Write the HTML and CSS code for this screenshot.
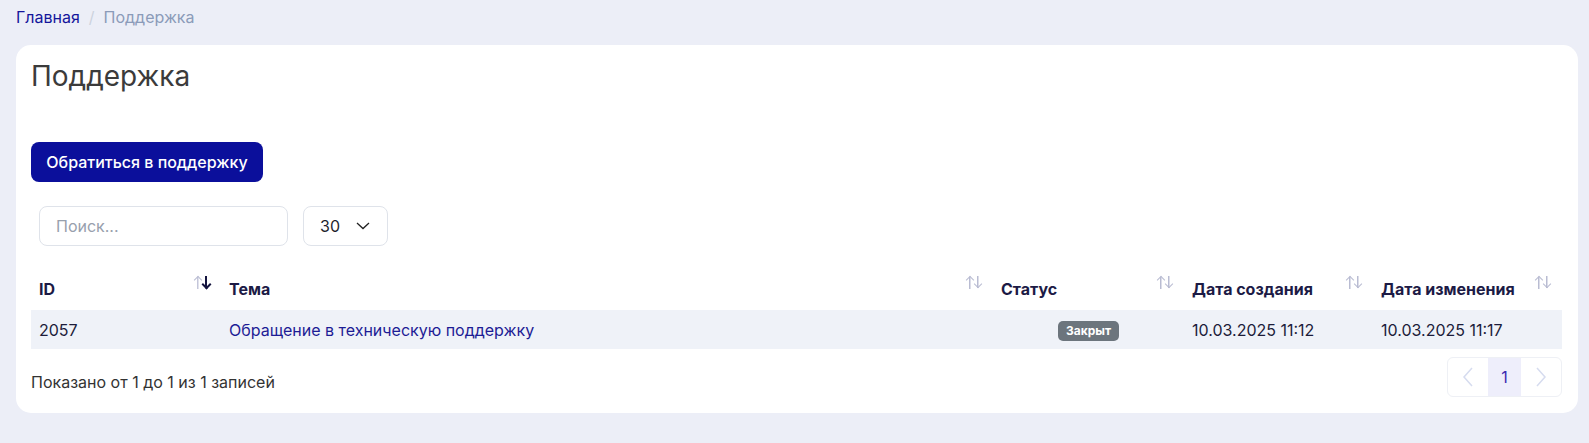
FILE: index.html
```html
<!DOCTYPE html>
<html lang="ru">
<head>
    <meta charset="UTF-8">
    <title>Поддержка</title>
    <meta name="viewport" content="width=device-width, initial-scale=1">
    <link rel="stylesheet" href="styles.css">
</head>
<body>
<nav class="breadcrumb">
    <a href="#">Главная</a>
    <span class="sep">/</span>
    <span class="current">Поддержка</span>
</nav>

<div class="card">
    <h1>Поддержка</h1>
    <button class="btn">Обратиться в поддержку</button>

    <div class="filters">
        <input type="text" class="search" placeholder="Поиск...">
        <div class="select">
            <span>30</span>
            <svg width="14" height="8" viewBox="0 0 14 8"><path d="M1 1l6 5.5L13 1" fill="none" stroke="#222" stroke-width="1.3"/></svg>
        </div>
    </div>

    <table class="grid">
        <colgroup>
            <col style="width: 190px">
            <col style="width: 772px">
            <col style="width: 191px">
            <col style="width: 189px">
            <col style="width: 189px">
        </colgroup>
        <thead>
        <tr>
            <th>ID<span class="sort active"></span></th>
            <th>Тема<span class="sort"></span></th>
            <th>Статус<span class="sort"></span></th>
            <th>Дата создания<span class="sort"></span></th>
            <th>Дата изменения<span class="sort"></span></th>
        </tr>
        </thead>
        <tbody>
        <tr>
            <td>2057</td>
            <td><a href="#">Обращение в техническую поддержку</a></td>
            <td class="center"><span class="badge">Закрыт</span></td>
            <td>10.03.2025 11:12</td>
            <td>10.03.2025 11:17</td>
        </tr>
        </tbody>
    </table>

    <div class="footer">
        <div class="info">Показано от 1 до 1 из 1 записей</div>
        <div class="pager">
            <span class="page arrow">
                <svg width="12" height="20" viewBox="0 0 12 20"><path d="M10 1L2 10l8 9" fill="none" stroke="#d6dcef" stroke-width="1.5"/></svg>
            </span>
            <span class="page active">1</span>
            <span class="page arrow">
                <svg width="12" height="20" viewBox="0 0 12 20"><path d="M2 1l8 9-8 9" fill="none" stroke="#d6dcef" stroke-width="1.5"/></svg>
            </span>
        </div>
    </div>
</div>
</body>
</html>
```

FILE: styles.css
```css
body {
    margin: 0;
    padding: 0 11px 30px 16px;
    font-family: Inter, "Noto Sans", sans-serif;
    font-size: 16px;
    background-color: #eceef7;
    color: #222;
}

a {
    text-decoration: none;
}

.breadcrumb {
    height: 34px;
    line-height: 34px;
    display: flex;
    gap: 9px;
}

.breadcrumb a {
    color: #14159b;
}

.breadcrumb .sep {
    color: #cdd3de;
}

.breadcrumb .current {
    color: #8b9bb9;
}

.card {
    margin-top: 11px;
    background-color: white;
    border-radius: 15px;
    padding: 15px 16px 16px 15px;
}

h1 {
    margin: 0;
    font-size: 28px;
    line-height: 32px;
    font-weight: 400;
    color: #3b3b3b;
}

.btn {
    display: block;
    margin-top: 50px;
    width: 232px;
    height: 40px;
    border: none;
    border-radius: 8px;
    background-color: #0b0f9b;
    color: white;
    font-family: inherit;
    font-size: 16px;
    font-weight: 500;
}

.filters {
    display: flex;
    gap: 15px;
    margin: 24px 0 0 8px;
}

.search {
    box-sizing: border-box;
    width: 249px;
    height: 40px;
    border: 1px solid #dfe3ea;
    border-radius: 8px;
    padding: 0 16px;
    font-family: inherit;
    font-size: 16px;
}

.search::placeholder {
    color: #98a0ad;
}

.select {
    box-sizing: border-box;
    width: 85px;
    height: 40px;
    border: 1px solid #dfe3ea;
    border-radius: 8px;
    padding: 0 17px 0 16px;
    display: flex;
    align-items: center;
    justify-content: space-between;
    color: #1f1f2e;
}

.grid {
    margin-top: 22px;
    width: 100%;
    border-collapse: collapse;
    table-layout: fixed;
}

.grid th {
    position: relative;
    height: 42px;
    padding: 0 8px;
    text-align: left;
    font-weight: 700;
    color: #1c1a45;
}

.grid td {
    height: 39px;
    padding: 0 8px;
    background-color: #eff2f8;
    color: #1c1c3a;
}

.grid td a {
    color: #1d1c95;
}

.grid td.center {
    text-align: center;
}

.sort {
    position: absolute;
    right: 9px;
    top: 8px;
    width: 19px;
    height: 13px;
    background:
        linear-gradient(#b9bcd2, #b9bcd2) 4px 1px / 1.5px 12px no-repeat,
        linear-gradient(#b9bcd2, #b9bcd2) 12px 0 / 1.5px 12px no-repeat;
}

.sort::before,
.sort::after {
    content: "";
    position: absolute;
    width: 5px;
    height: 5px;
    border-left: 1.5px solid #b9bcd2;
    border-top: 1.5px solid #b9bcd2;
}

.sort::before {
    left: 1.5px;
    top: 1px;
    transform: rotate(45deg);
}

.sort::after {
    left: 9.5px;
    top: 5px;
    transform: rotate(225deg);
}

.sort.active {
    background:
        linear-gradient(#c4c6da, #c4c6da) 4px 1px / 1.5px 12px no-repeat,
        linear-gradient(#15153f, #15153f) 12px 0 / 2px 12px no-repeat;
}

.sort.active::after {
    border-color: #15153f;
    border-width: 2px;
}

.badge {
    display: inline-block;
    background-color: #6c757d;
    color: white;
    font-size: 12px;
    font-weight: 700;
    line-height: 20px;
    padding: 0 8px;
    border-radius: 5px;
}

.footer {
    display: flex;
    justify-content: space-between;
    margin-top: 8px;
}

.info {
    padding-top: 14px;
    line-height: 22px;
    color: #333;
}

.pager {
    display: flex;
    border: 1px solid #eef0f5;
    border-radius: 6px;
    height: 38px;
    overflow: hidden;
}

.page {
    display: flex;
    align-items: center;
    justify-content: center;
    width: 40px;
}

.page.active {
    width: 33px;
    background-color: #eeeefb;
    color: #3a2ab0;
}
```
